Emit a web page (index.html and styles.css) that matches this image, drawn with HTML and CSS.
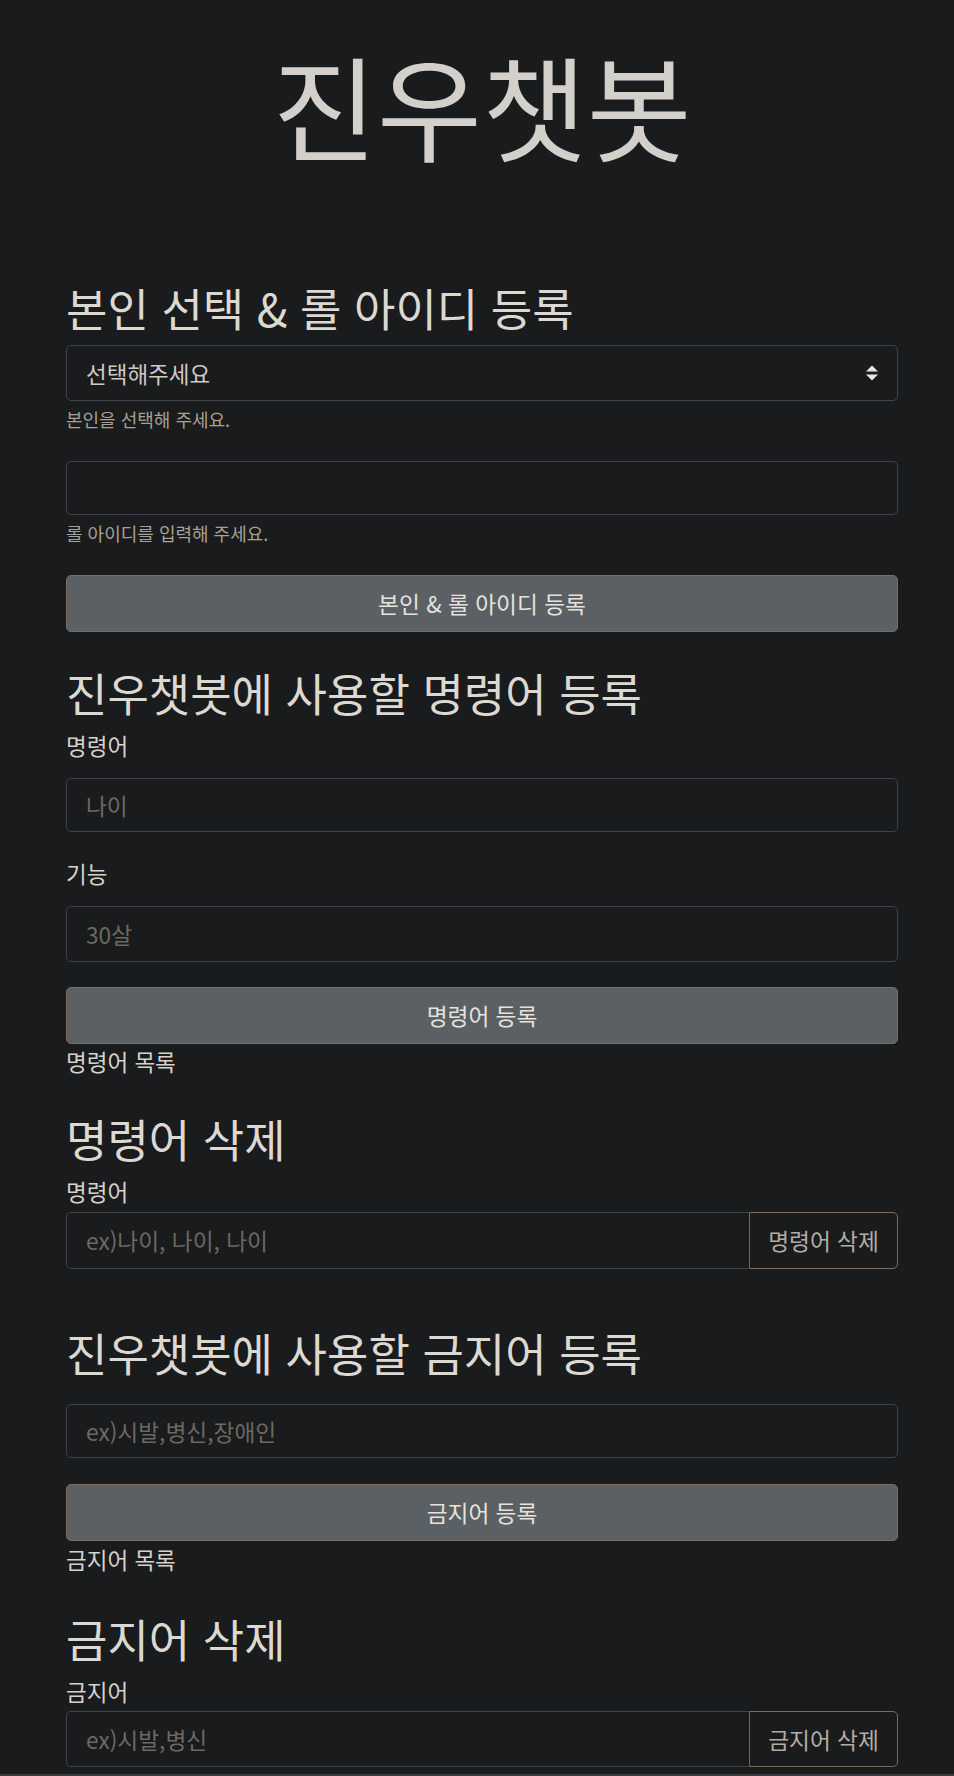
FILE: index.html
```html
<!DOCTYPE html>
<html lang="ko">
<head>
<meta charset="utf-8">
<title>진우챗봇</title>
<link rel="stylesheet" href="styles.css">
</head>
<body>
<div class="container">
  <h1 class="brand">진우챗봇</h1>

  <section class="sec sec-first">
    <h2 class="sec-title">본인 선택 &amp; 롤 아이디 등록</h2>
    <div class="select">
      <span class="select-text">선택해주세요</span>
      <svg class="select-arrow" width="12" height="16" viewBox="0 0 4 5" aria-hidden="true"><path fill="#e8e6e3" d="M2 0L0 2h4zm0 5L0 3h4z"/></svg>
    </div>
    <p class="help">본인을 선택해 주세요.</p>
    <div class="input input-after-help"></div>
    <p class="help">롤 아이디를 입력해 주세요.</p>
    <button class="btn btn-after-help">본인 &amp; 롤 아이디 등록</button>
  </section>

  <section class="sec sec-cmd">
    <h2 class="sec-title">진우챗봇에 사용할 명령어 등록</h2>
    <label class="label label-first">명령어</label>
    <div class="input"><span class="ph">나이</span></div>
    <label class="label label-next">기능</label>
    <div class="input input-tall"><span class="ph">30살</span></div>
    <button class="btn btn-after-input">명령어 등록</button>
    <p class="list-title">명령어 목록</p>
  </section>

  <section class="sec sec-del1">
    <h2 class="sec-title">명령어 삭제</h2>
    <label class="label label-first">명령어</label>
    <div class="group">
      <div class="group-input"><span class="ph">ex)나이, 나이, 나이</span></div>
      <button class="btn-outline">명령어 삭제</button>
    </div>
  </section>

  <section class="sec sec-ban">
    <h2 class="sec-title">진우챗봇에 사용할 금지어 등록</h2>
    <div class="input input-ban"><span class="ph">ex)시발,병신,장애인</span></div>
    <button class="btn btn-ban">금지어 등록</button>
    <p class="list-title list-title-ban">금지어 목록</p>
  </section>

  <section class="sec sec-del2">
    <h2 class="sec-title">금지어 삭제</h2>
    <label class="label label-first">금지어</label>
    <div class="group group-last">
      <div class="group-input"><span class="ph">ex)시발,병신</span></div>
      <button class="btn-outline">금지어 삭제</button>
    </div>
  </section>
</div>
<div class="bottom-strip"></div>
</body>
</html>
```

FILE: styles.css
```css
html, body {
  margin: 0;
  padding: 0;
  background: #1a1b1d;
}
body {
  font-family: "Noto Sans CJK KR", "Noto Sans", sans-serif;
  color: #dcd8d2;
  overflow: hidden;
}
.container {
  width: 832px;
  margin: 0 56px 0 66px;
  padding-top: 47px;
}
.brand {
  margin: 0;
  font-size: 114px;
  line-height: 114px;
  height: 114px;
  font-weight: 400;
  text-align: center;
  color: #d3d0cb;
}
.sec { display: flex; flex-direction: column; }
.sec-first { margin-top: 123.5px; }
.sec-cmd { margin-top: 37.5px; }
.sec-del1 { margin-top: 43.25px; }
.sec-ban { margin-top: 60.5px; }
.sec-del2 { margin-top: 45.25px; }

.sec-title {
  margin: 0;
  font-size: 45px;
  line-height: 45px;
  height: 45px;
  font-weight: 400;
  color: #dcd8d2;
  white-space: nowrap;
}
.select {
  margin-top: 15.5px;
  height: 56px;
  box-sizing: border-box;
  border: 1px solid #3d4346;
  border-radius: 5px;
  display: flex;
  align-items: center;
  justify-content: space-between;
  padding: 0 19px 0 19px;
}
.select-text {
  font-size: 22.5px;
  color: #cfcac3;
}
.select-arrow { display: block; }
.help {
  margin: 8.5px 0 0;
  font-size: 18px;
  line-height: 18px;
  height: 18px;
  color: #a8a196;
}
.input {
  margin-top: 21.75px;
  height: 54px;
  box-sizing: border-box;
  border: 1px solid #3d4346;
  border-radius: 5px;
  display: flex;
  align-items: center;
  padding: 0 19px;
}
.input-after-help { margin-top: 33.5px; }
.input-tall { height: 56px; }
.input-ban { margin-top: 29.5px; }
.ph {
  font-size: 22.7px;
  color: #6b6963;
  white-space: nowrap;
}
.label {
  display: block;
  font-size: 22.5px;
  line-height: 22.5px;
  height: 22.5px;
  color: #d6d2cc;
}
.label-first { margin-top: 19.25px; }
.label-next { margin-top: 29.75px; }
.btn {
  height: 57px;
  box-sizing: border-box;
  border: 1px solid #7a6c5e;
  border-radius: 5px;
  background: #5a6064;
  color: #e6e3de;
  font-family: inherit;
  font-size: 22.7px;
  padding: 0;
  width: 100%;
}
.btn-after-help { margin-top: 33.5px; }
.btn-after-input { margin-top: 25px; }
.btn-ban { margin-top: 26px; }
.list-title {
  margin: 5.75px 0 0;
  font-size: 22.5px;
  line-height: 22.5px;
  height: 22.5px;
  color: #d6d2cc;
}
.list-title-ban { margin-top: 6.75px; }
.group {
  margin-top: 9.75px;
  display: flex;
  height: 57px;
}
.group-last { margin-top: 8.75px; height: 56px; }
.group-input {
  flex: 1;
  box-sizing: border-box;
  border: 1px solid #3d4346;
  border-right: none;
  border-radius: 5px 0 0 5px;
  display: flex;
  align-items: center;
  padding: 0 19px;
}
.btn-outline {
  width: 149px;
  box-sizing: border-box;
  border: 1px solid #776b5f;
  border-radius: 0 5px 5px 0;
  background: transparent;
  color: #b3ada3;
  font-family: inherit;
  font-size: 22.7px;
  padding: 0;
}
.bottom-strip {
  position: absolute;
  left: 0;
  top: 1774px;
  width: 954px;
  height: 2px;
  background: #3b3d3f;
}
```
